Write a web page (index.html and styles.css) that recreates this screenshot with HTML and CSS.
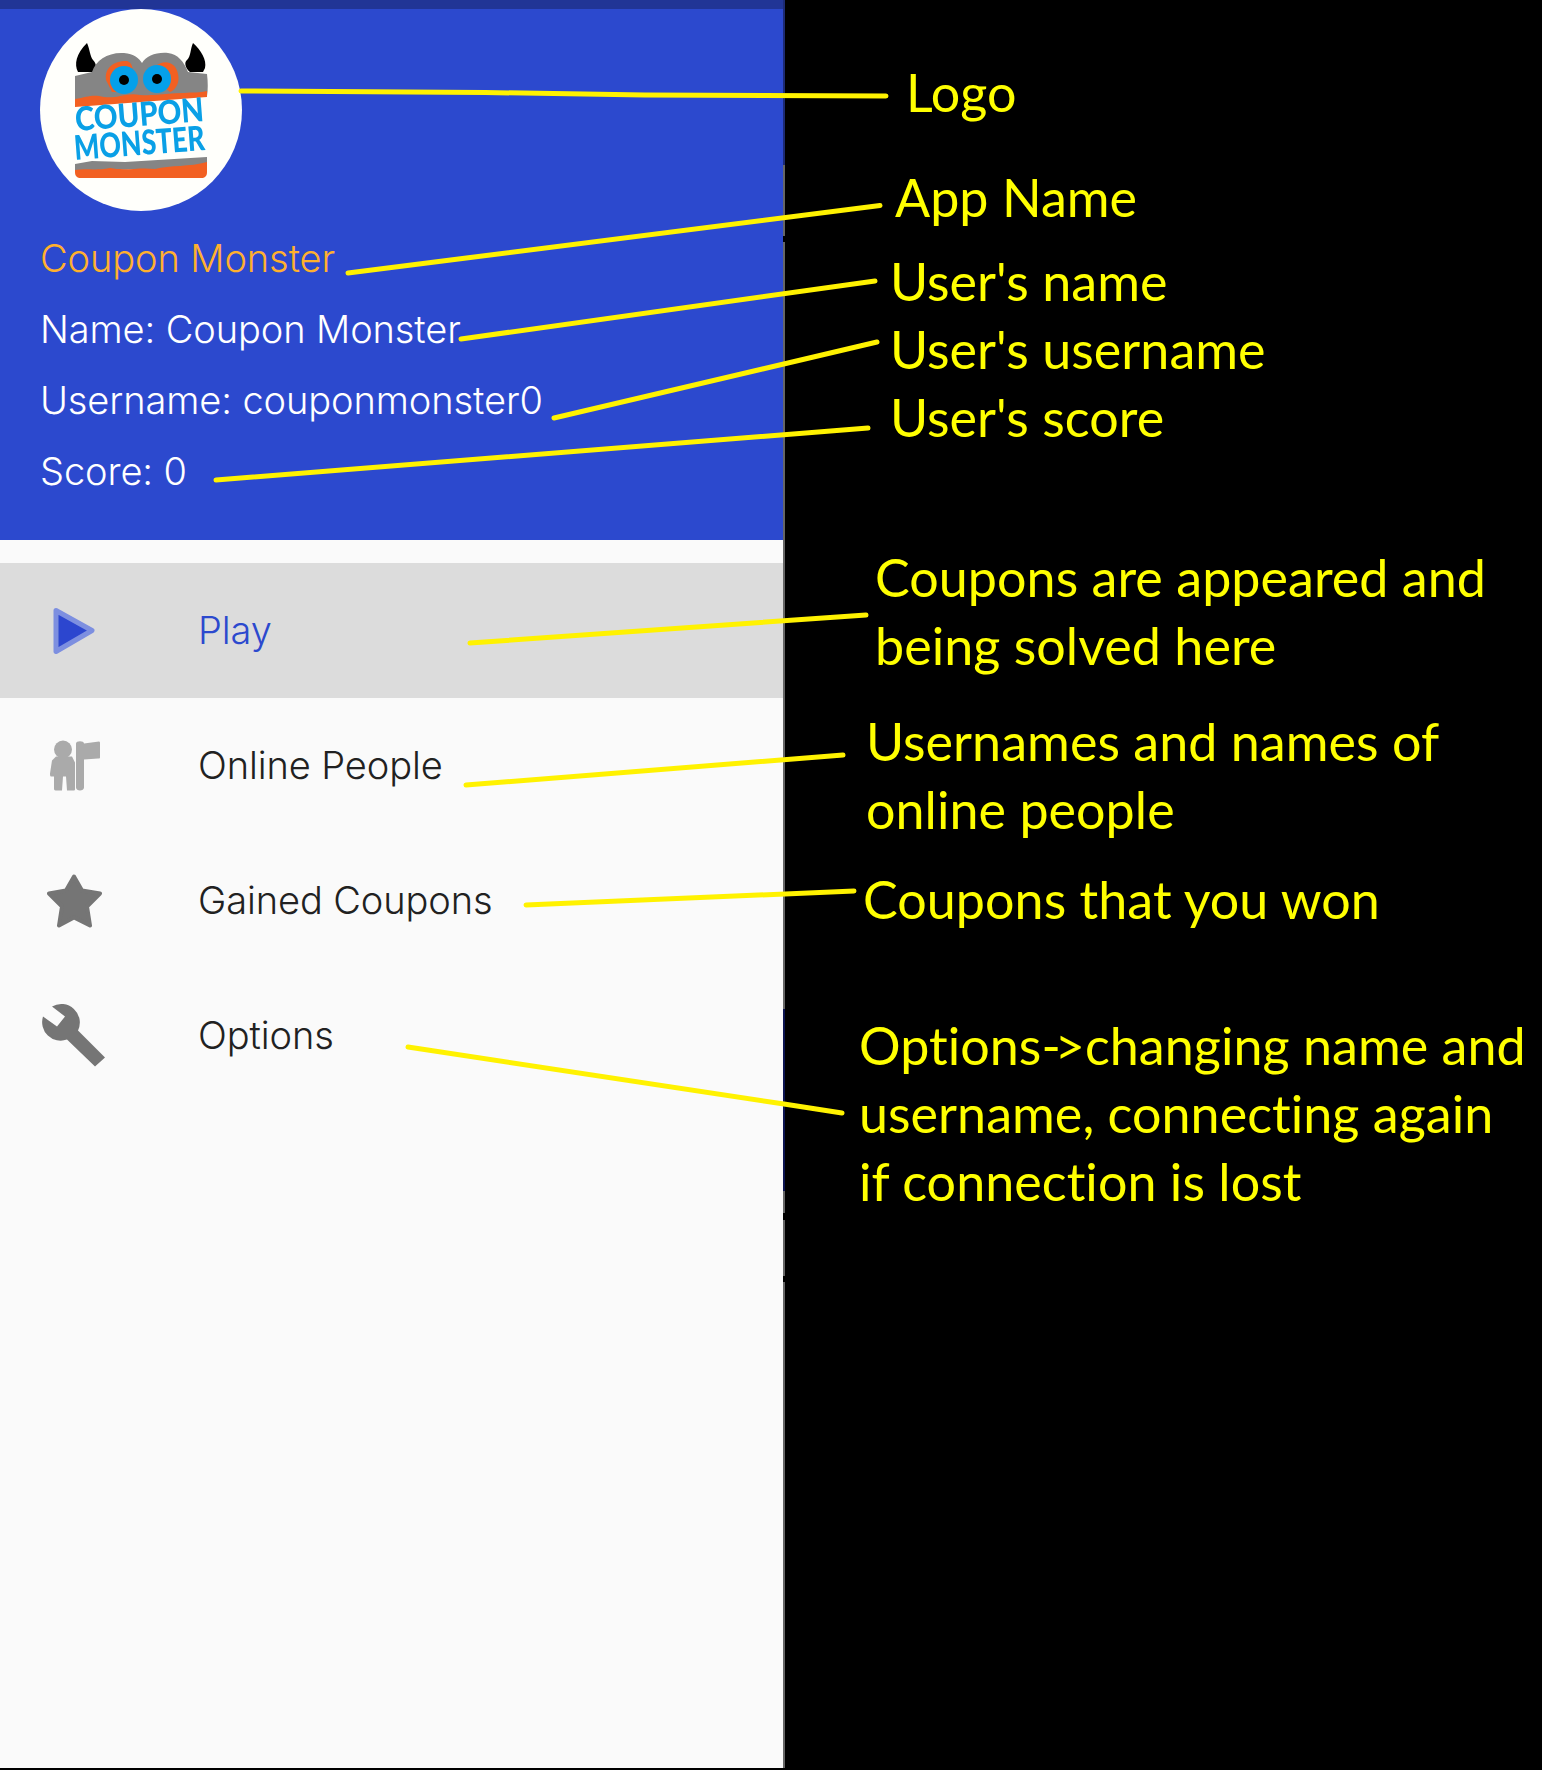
FILE: index.html
```html
<!DOCTYPE html>
<html lang="en">
<head>
<meta charset="utf-8">
<title>Coupon Monster</title>
<link rel="stylesheet" href="styles.css">
</head>
<body>
<div class="app">
  <aside class="drawer">
    <div class="statusbar"></div>
    <header class="head">
      <svg class="logo" viewBox="40 9 202 202" role="img" aria-label="Coupon Monster logo">
        <circle cx="141" cy="110" r="101" fill="#fffffb"/>
        <g class="fuzzy">
        <path class="horn" d="M78 72C74 64 76 54 87 43C90 50 90 56 93 60C97 64 96 68 95 72Z"/>
        <path class="horn" d="M190 72C185 68 184 62 187 60C191 56 190 50 193 43C201 50 207 60 205 68L203 72Z"/>
        <path class="grey" d="M75 76L92 72C96 60 108 52 124 53C134 54 139 58 142 63C146 56 156 52 168 53C178 54 184 62 188 72L207 74C208 82 208 90 207 96L75 105Z"/>
        <path class="orange" d="M106 80C104 68 114 61 126 61C132 61 136 70 130 92L112 92Z"/>
        <path class="orange" d="M156 66C164 59 176 62 178 74C180 82 176 90 170 92L156 80Z"/>
        <circle class="iris" cx="124" cy="80" r="14"/>
        <circle class="iris" cx="157" cy="79" r="14"/>
        <circle cx="124" cy="80" r="5"/>
        <circle cx="157" cy="79" r="5"/>
        <path class="orange" d="M75 99C88 97 92 94 104 97C118 99 126 92 140 95C156 96 170 93 184 93C192 92 200 93 207 91V97L75 107Z"/>
        <text class="logotext t1" transform="translate(76 131) rotate(-4.4)" textLength="129" lengthAdjust="spacingAndGlyphs">COUPON</text>
        <text class="logotext t2" transform="translate(75 160) rotate(-4.4)" textLength="131" lengthAdjust="spacingAndGlyphs">MONSTER</text>
        <path class="grey" d="M75 164L92 161L125 162L207 157V164C190 167 170 166 155 171C140 168 125 171 110 169C95 171 85 171 75 171Z"/>
        <path class="orange" d="M75 170C85 168 95 171 110 168C125 171 140 167 155 169C170 165 190 167 207 162V172C207 176 205 178 201 178H81C77 178 75 176 75 172Z"/>
        </g>
      </svg>
      <div class="line app-name">Coupon Monster</div>
      <div class="line">Name: Coupon Monster</div>
      <div class="line">Username: couponmonster0</div>
      <div class="line">Score: 0</div>
    </header>
    <nav class="menu">
      <a class="item active">
        <svg class="ico" viewBox="34 590.5 80 80"><path class="play" d="M56 610L92 630L56 651Z"/></svg>
        <span>Play</span>
      </a>
      <a class="item">
        <svg class="ico soft fuzzy" viewBox="34 725.5 80 80">
          <circle cx="63" cy="749" r="9"/>
          <path d="M56 756H72L75 762V789C75 790 74 790 72 790H67L66 776H63L62 790H57C55 790 54 790 54 788V776H51C50 776 50 774 50 773L52 760Z"/>
          <path d="M76 743C76 740 84 740 84 743V743L99 741C100 741 100 742 100 743V757C100 758 99 758 98 758L84 759V787C84 791 76 791 76 787Z"/>
        </svg>
        <span>Online People</span>
      </a>
      <a class="item">
        <svg class="ico solid fuzzy" viewBox="34 860.5 80 80"><path class="star" d="M74 876L82 890L100 893L87 906L90 925L74 917L59 925L62 906L49 893L66 890Z"/></svg>
        <span>Gained Coupons</span>
      </a>
      <a class="item">
        <svg class="ico solid" viewBox="34 995.5 80 80"><path d="M52 1006A18.5 18.5 0 0 1 78 1030L105 1057L95 1066L67 1039A18.5 18.5 0 0 1 43 1016L57 1026L65 1016Z"/></svg>
        <span>Options</span>
      </a>
    </nav>
  </aside>
  <div class="edge"></div>
</div>

<svg class="leaders" viewBox="0 0 1542 1770">
  <polyline points="241,91 485,92.5 645,95 886,96"/>
  <line x1="348" y1="273" x2="880" y2="205.5"/>
  <line x1="461" y1="339" x2="875" y2="281"/>
  <line x1="554" y1="418" x2="877" y2="342"/>
  <line x1="216" y1="480" x2="868" y2="428"/>
  <line x1="470" y1="643" x2="866" y2="615"/>
  <line x1="466" y1="785" x2="843" y2="755"/>
  <line x1="526" y1="905" x2="854" y2="891"/>
  <polyline points="408,1047 784,1104 842,1113"/>
</svg>

<p class="note n-logo">Logo</p>
<p class="note n-app">App Name</p>
<p class="note n-name">User's name</p>
<p class="note n-user">User's username</p>
<p class="note n-score">User's score</p>
<p class="note n-play">Coupons are appeared and<br>being solved here</p>
<p class="note n-online">Usernames and names of<br>online people</p>
<p class="note n-gained">Coupons that you won</p>
<p class="note n-options">Options<span class="arrow">-&gt;</span>changing name and<br>username, connecting again<br>if connection is lost</p>
</body>
</html>
```
FILE: styles.css
```css
html, body {
  margin: 0;
  height: 1770px;
  overflow: hidden;
  background: #000;
}
body {
  position: relative;
  font-family: Inter, "Noto Sans", sans-serif;
}
.app {
  display: flex;
  height: 1768px;
}
.drawer {
  width: 783px;
  background: #fafafa;
  display: flex;
  flex-direction: column;
}
.edge {
  width: 2px;
  background: linear-gradient(to bottom,
    #1c2a75 0, #1c2a75 165px,
    #666 165px, #666 236px,
    #000 236px, #000 242px,
    #666 242px, #666 1009px,
    #0c1450 1009px, #0c1450 1191px,
    #666 1191px, #666 1213px,
    #000 1213px, #000 1220px,
    #666 1220px, #666 1276px,
    #000 1276px, #000 1282px,
    #666 1282px);
}
.statusbar {
  height: 9px;
  background: #213596;
}
.head {
  height: 531px;
  box-sizing: border-box;
  background: #2c49ce;
  padding-left: 40px;
  color: #fff;
}
.logo {
  display: block;
  width: 202px;
  height: 202px;
  margin-bottom: 12px;
}
.fuzzy { filter: blur(0.5px); }
.horn { fill: #000; }
.grey { fill: #858585; }
.orange { fill: #f26022; }
.iris { fill: #05a0ea; }
.logotext {
  font-family: Lato, sans-serif;
  font-weight: 900;
  fill: #0aa0e6;
}
.t1 { font-size: 33px; }
.t2 { font-size: 34px; }
.line {
  height: 71px;
  line-height: 71px;
  font-size: 38px;
  font-weight: 300;
  letter-spacing: -0.1px;
}
.app-name { color: #ffb02e; }
.menu {
  margin-top: 23px;
  display: flex;
  flex-direction: column;
}
.item {
  height: 135px;
  display: flex;
  align-items: center;
  font-size: 38px;
  font-weight: 300;
  letter-spacing: -0.1px;
  color: #212121;
}
.item span { margin-top: -2px; margin-left: -1px; }
.item.active {
  background: #dcdcdc;
  color: #2c49ce;
}
.ico {
  width: 80px;
  height: 80px;
  margin-left: 34px;
  margin-right: 85px;
  flex: none;
}
.play {
  fill: #2c46cf;
  stroke: #7d8fe0;
  stroke-width: 5px;
  stroke-linejoin: round;
}
.soft { fill: #aaa; }
.solid { fill: #757575; }
.star {
  stroke: #757575;
  stroke-width: 4px;
  stroke-linejoin: round;
}
.leaders {
  position: absolute;
  left: 0;
  top: 0;
  width: 1542px;
  height: 1770px;
  fill: none;
  stroke: #fff200;
  stroke-width: 5px;
  stroke-linecap: round;
}
.note {
  position: absolute;
  margin: 0;
  color: #ff0;
  font-family: Lato, "Open Sans", sans-serif;
  font-size: 52px;
  font-variant-ligatures: none;
  letter-spacing: 0.05px;
  line-height: 68px;
  white-space: nowrap;
}
.arrow { letter-spacing: -6px; margin-right: 6px; }
.n-logo { left: 906px; top: 58px; }
.n-app { left: 895px; top: 163px; }
.n-name { left: 890px; top: 247px; }
.n-user { left: 890px; top: 315px; }
.n-score { left: 890px; top: 383px; }
.n-play { left: 875px; top: 543px; }
.n-online { left: 866px; top: 707px; }
.n-gained { left: 863px; top: 865px; }
.n-options { left: 859px; top: 1011px; }
```
